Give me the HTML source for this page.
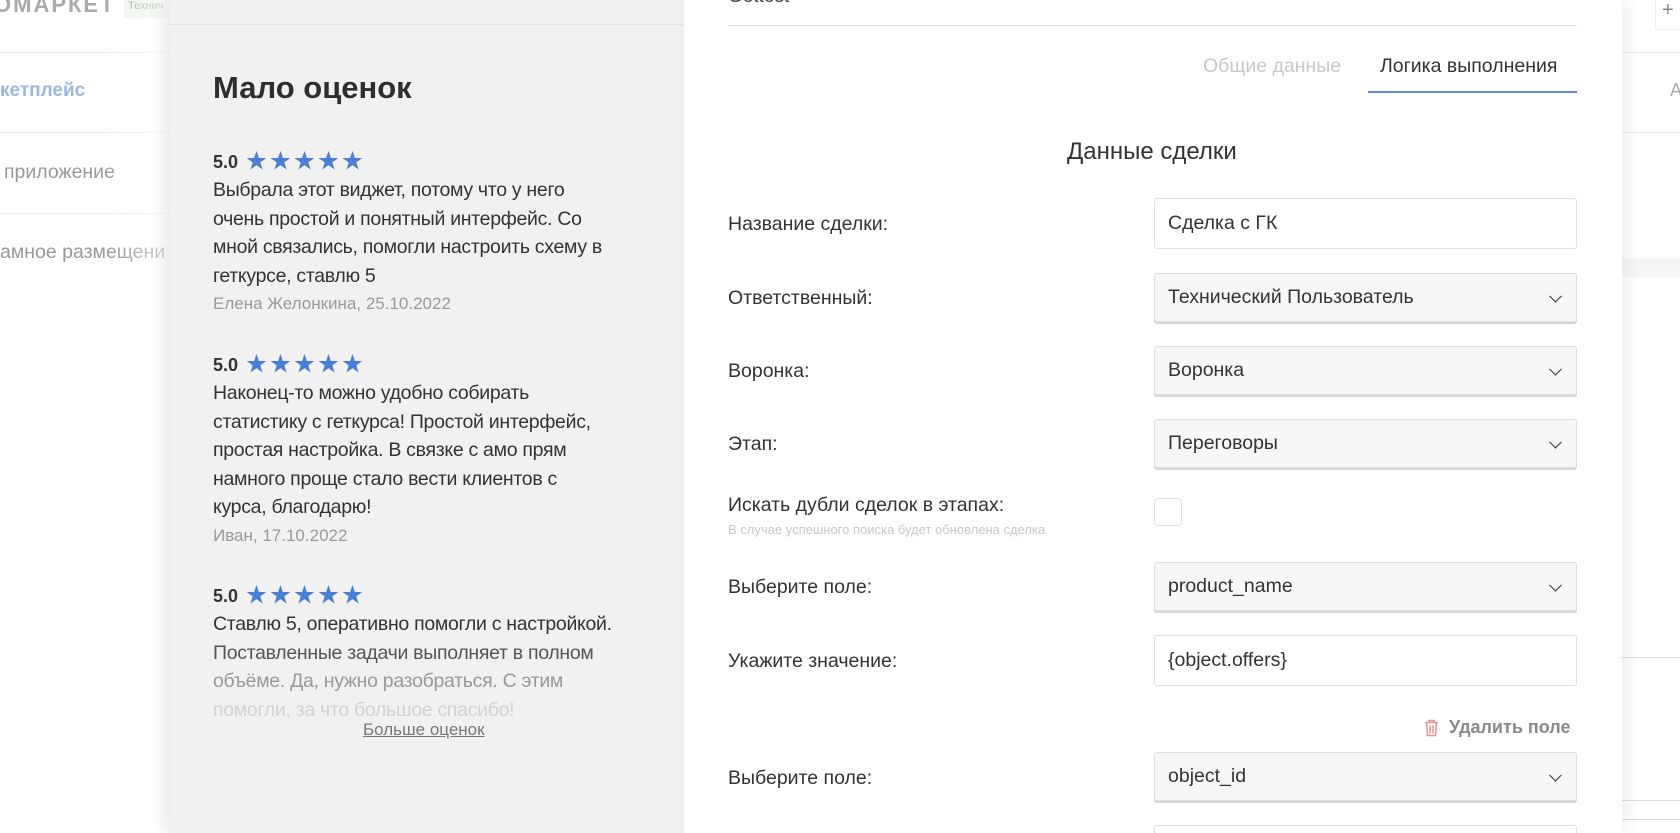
<!DOCTYPE html>
<html style="width:1680px;height:833px;overflow:hidden"><head><meta charset="utf-8"><style>
*{margin:0;padding:0;box-sizing:border-box}
body{width:1680px;height:833px;overflow:hidden;background:#fff;font-family:"Liberation Sans","Noto Sans CJK SC",sans-serif;position:relative;color:#333}
.a{position:absolute;white-space:nowrap}
.bgtxt{color:#999;font-size:18px}
.hl{position:absolute;height:1px;background:#ececec}
.left{position:absolute;left:170px;top:0;width:514px;height:833px;background:#f1f1f1;box-shadow:-8px 0 14px rgba(0,0,0,.08)}
.right{position:absolute;left:684px;top:0;width:938px;height:833px;background:#fff;box-shadow:6px 0 14px rgba(0,0,0,.06)}
.rv{font-size:19.5px;line-height:28.5px;color:#333;letter-spacing:-0.3px}
.rate{font-size:18px;font-weight:bold;color:#333}
.star{color:#4a7fd4;font-size:21px;letter-spacing:3px;margin-left:8px}
.auth{color:#9a9a9a;font-size:17px}
.lbl{font-size:19.5px;color:#333}
.box{position:absolute;left:1154px;width:423px;border:1px solid #e0e0e0;border-radius:3px;background:#fff;font-size:19.5px;padding-left:13px;display:flex;align-items:center;color:#333;overflow:hidden}
.sel{background:#f7f7f7;border:1px solid #ddd;box-shadow:0 2px 0 #d6d6d6}
.chev{position:absolute;right:16px;top:50%;width:9px;height:9px;border-right:1.6px solid #333;border-bottom:1.6px solid #333;transform:translateY(-70%) rotate(45deg)}
</style></head><body>
<div class="a" style="left:-6px;top:-8px;font-size:22px;font-weight:bold;color:#aaa;letter-spacing:2px">ОМАРКЕТ</div>
<div class="a" style="left:124px;top:0;height:18px;width:60px;background:#eef5ee;color:#9a9;font-size:11px;padding:0 4px">Технич</div>
<div class="hl" style="left:0;top:52px;width:170px"></div>
<div class="a" style="left:0;top:80px;font-size:19px;color:#9bb8e0;font-weight:bold">кетплейс</div>
<div class="hl" style="left:0;top:132px;width:170px"></div>
<div class="a bgtxt" style="left:4px;top:161px;font-size:19.5px">приложение</div>
<div class="hl" style="left:0;top:213px;width:170px"></div>
<div class="a bgtxt" style="left:0;top:241px;font-size:19.5px">амное размещени</div>
<div class="a" style="left:0;top:0;width:170px;height:833px;background:linear-gradient(90deg,rgba(255,255,255,0) 60%,rgba(255,255,255,.6))"></div>

<div class="a" style="left:1655px;top:-2px;width:30px;height:32px;border:1px solid #eee;color:#888;font-size:20px;padding-left:6px">+</div>
<div class="hl" style="left:1622px;top:52px;width:58px"></div>
<div class="a" style="left:1670px;top:80px;color:#aaa;font-size:18px">A</div>
<div class="hl" style="left:1622px;top:132px;width:58px"></div>
<div class="a" style="left:1622px;top:258px;width:58px;height:19px;background:#f6f6f6"></div>
<div class="hl" style="left:1622px;top:657px;width:58px;background:#ddd"></div>
<div class="hl" style="left:1622px;top:800px;width:58px;background:#ddd"></div>
<div class="hl" style="left:1622px;top:819px;width:58px;background:#ddd"></div>

<div class="left"></div>
<div class="hl" style="left:170px;top:24px;width:514px;background:#e2e2e2"></div>
<div class="a" style="left:213px;top:70px;font-size:31px;font-weight:bold;color:#2e2e2e">Мало оценок</div>

<div class="a" style="left:213px;top:145px"><span class="rate">5.0</span><span class="star">★★★★★</span></div>
<div class="a rv" style="left:213px;top:176px">Выбрала этот виджет, потому что у него<br>очень простой и понятный интерфейс. Со<br>мной связались, помогли настроить схему в<br>геткурсе, ставлю 5</div>
<div class="a auth" style="left:213px;top:294px">Елена Желонкина, 25.10.2022</div>

<div class="a" style="left:213px;top:348px"><span class="rate">5.0</span><span class="star">★★★★★</span></div>
<div class="a rv" style="left:213px;top:379px">Наконец-то можно удобно собирать<br>статистику с геткурса! Простой интерфейс,<br>простая настройка. В связке с амо прям<br>намного проще стало вести клиентов с<br>курса, благодарю!</div>
<div class="a auth" style="left:213px;top:526px">Иван, 17.10.2022</div>

<div class="a" style="left:213px;top:579px"><span class="rate">5.0</span><span class="star">★★★★★</span></div>
<div class="a rv" style="left:213px;top:610px">Ставлю 5, оперативно помогли с настройкой.<br><span style="color:#555">Поставленные задачи выполняет в полном</span><br><span style="color:#999">объёме. Да, нужно разобраться. С этим</span><br><span style="color:#d2d2d2">помогли, за что большое спасибо!</span></div>
<div class="a" style="left:170px;top:717px;width:514px;height:20px;background:#f1f1f1"></div>
<div class="a" style="left:363px;top:720px;font-size:17px;color:#777;text-decoration:underline">Больше оценок</div>

<div class="right"></div>
<div class="a" style="left:728px;top:-14px;font-size:19px;color:#444">Gettest</div>
<div class="hl" style="left:728px;top:25px;width:849px;background:#e3e3e3"></div>
<div class="a" style="left:1203px;top:55px;font-size:19.5px;color:#c8c8c8">Общие данные</div>
<div class="a" style="left:1380px;top:55px;font-size:19.5px;color:#333">Логика выполнения</div>
<div class="a" style="left:1368px;top:91px;width:209px;height:2px;background:#5b8bd6"></div>
<div class="a" style="left:1067px;top:138px;font-size:24px;color:#333">Данные сделки</div>

<div class="a lbl" style="left:728px;top:213px">Название сделки:</div>
<div class="box" style="top:198px;height:51px">Сделка с ГК</div>

<div class="a lbl" style="left:728px;top:287px">Ответственный:</div>
<div class="box sel" style="top:273px;height:49px">Технический Пользователь<i class="chev"></i></div>

<div class="a lbl" style="left:728px;top:360px">Воронка:</div>
<div class="box sel" style="top:346px;height:49px">Воронка<i class="chev"></i></div>

<div class="a lbl" style="left:728px;top:433px">Этап:</div>
<div class="box sel" style="top:419px;height:49px">Переговоры<i class="chev"></i></div>

<div class="a lbl" style="left:728px;top:494px">Искать дубли сделок в этапах:</div>
<div class="a" style="left:728px;top:522px;font-size:13px;color:#c8c8c8">В случае успешного поиска будет обновлена сделка</div>
<div class="a" style="left:1154px;top:498px;width:28px;height:28px;border:1px solid #e0e0e0;border-radius:4px;background:#fff"></div>

<div class="a lbl" style="left:728px;top:576px">Выберите поле:</div>
<div class="box sel" style="top:562px;height:49px">product_name<i class="chev"></i></div>

<div class="a lbl" style="left:728px;top:650px">Укажите значение:</div>
<div class="box" style="top:635px;height:51px">{object.offers}</div>

<svg class="a" style="left:1424px;top:719px" width="15" height="18" viewBox="0 0 15 18"><path d="M1 3.5h13M5 3.5V1.5h5v2M2.5 3.5l1 13h8l1-13M6 6.5v8M9 6.5v8" fill="none" stroke="#e89090" stroke-width="1.5"/></svg>
<div class="a" style="left:1449px;top:717px;font-size:18px;font-weight:bold;color:#8a8a8a">Удалить поле</div>

<div class="a lbl" style="left:728px;top:767px">Выберите поле:</div>
<div class="box sel" style="top:752px;height:49px">object_id<i class="chev"></i></div>

<div class="box" style="top:825px;height:8px;border-bottom:none;border-radius:3px 3px 0 0"></div>
</body></html>
